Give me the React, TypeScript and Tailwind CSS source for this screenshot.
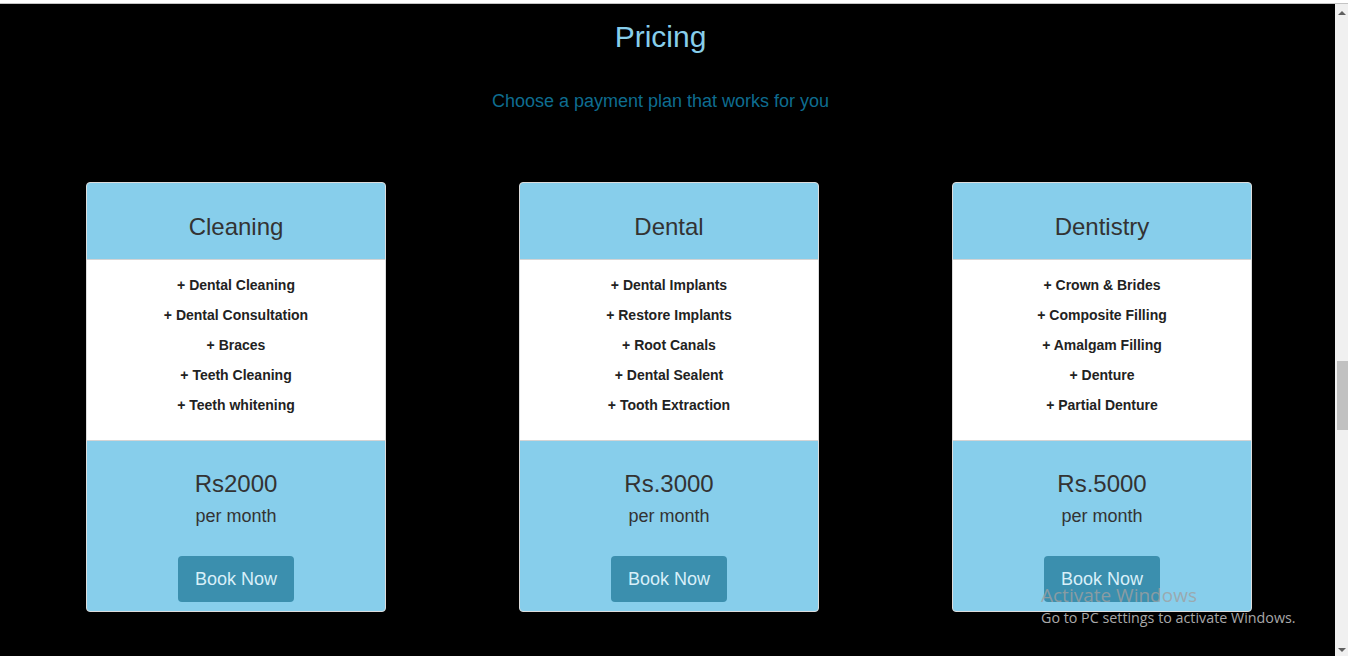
const plans = [
  {
    name: "Cleaning",
    items: ["Dental Cleaning", "Dental Consultation", "Braces", "Teeth Cleaning", "Teeth whitening"],
    price: "Rs2000",
  },
  {
    name: "Dental",
    items: ["Dental Implants", "Restore Implants", "Root Canals", "Dental Sealent", "Tooth Extraction"],
    price: "Rs.3000",
  },
  {
    name: "Dentistry",
    items: ["Crown & Brides", "Composite Filling", "Amalgam Filling", "Denture", "Partial Denture"],
    price: "Rs.5000",
  },
];

function PlanCard({ plan }: { plan: (typeof plans)[number] }) {
  return (
    <div className="w-[300px] rounded-[4px] border border-[#dcdcdc] overflow-hidden bg-[#87ceeb] text-center text-[#333]">
      <div className="pt-[30px] pb-[18px] border-b border-[#d4d4d4]">
        <h3 className="text-[24px] leading-[28px]">{plan.name}</h3>
      </div>
      <ul className="bg-white pt-[10px] pb-[20px] border-b border-[#d4d4d4]">
        {plan.items.map((item) => (
          <li key={item} className="text-[14px] leading-[30px] font-bold text-[#222]">
            + {item}
          </li>
        ))}
      </ul>
      <div className="pt-[29px] pb-[9px] flex flex-col items-center">
        <div className="text-[24px] leading-[28px]">{plan.price}</div>
        <div className="mt-[6px] text-[18px] leading-[24px]">per month</div>
        <button className="mt-[28px] w-[116px] h-[46px] rounded-[4px] bg-[#3b8fae] text-[18px] text-[#d8eff9]">
          Book Now
        </button>
      </div>
    </div>
  );
}

export default function App() {
  return (
    <div className="relative h-[656px] w-[1348px] overflow-hidden bg-black font-['Liberation_Sans',Arial,sans-serif]">
      {/* browser chrome strip */}
      <div className="h-[4px] bg-white border-b border-[#c4c4c4]" />

      <div className="flex h-[652px]">
        <main className="flex-1">
          <div className="pr-[14px] text-center">
            <h1 className="mt-[16px] text-[30px] leading-[33px] text-[#87ceeb]">Pricing</h1>
            <p className="mt-[38px] text-[18px] leading-[20px] text-[#0e6d90]">
              Choose a payment plan that works for you
            </p>
          </div>

          <div className="mt-[71px] ml-[3px] flex justify-center gap-[133px]">
            {plans.map((p) => (
              <PlanCard key={p.name} plan={p} />
            ))}
          </div>
        </main>

        {/* scrollbar */}
        <div className="w-[13px] bg-[#f0f0f0] flex flex-col items-center">
          <div className="mt-[7px] h-0 w-0 border-x-[4px] border-x-transparent border-b-[4px] border-b-[#606060]" />
          <div className="mt-[346px] ml-[2px] h-[69px] w-[11px] bg-[#c1c1c1]" />
          <div className="mt-auto mb-[4px] h-0 w-0 border-x-[4px] border-x-transparent border-t-[4px] border-t-[#606060]" />
        </div>
      </div>

      {/* Windows activation watermark */}
      <div className="absolute left-[1041px] top-[582px] font-['Open_Sans',sans-serif] text-[#a0a0a0]/80 pointer-events-none">
        <div className="text-[19px] leading-[26px]">Activate Windows</div>
        <div className="text-[14.3px] leading-[20px] text-[#a8a8a8]">Go to PC settings to activate Windows.</div>
      </div>
    </div>
  );
}
